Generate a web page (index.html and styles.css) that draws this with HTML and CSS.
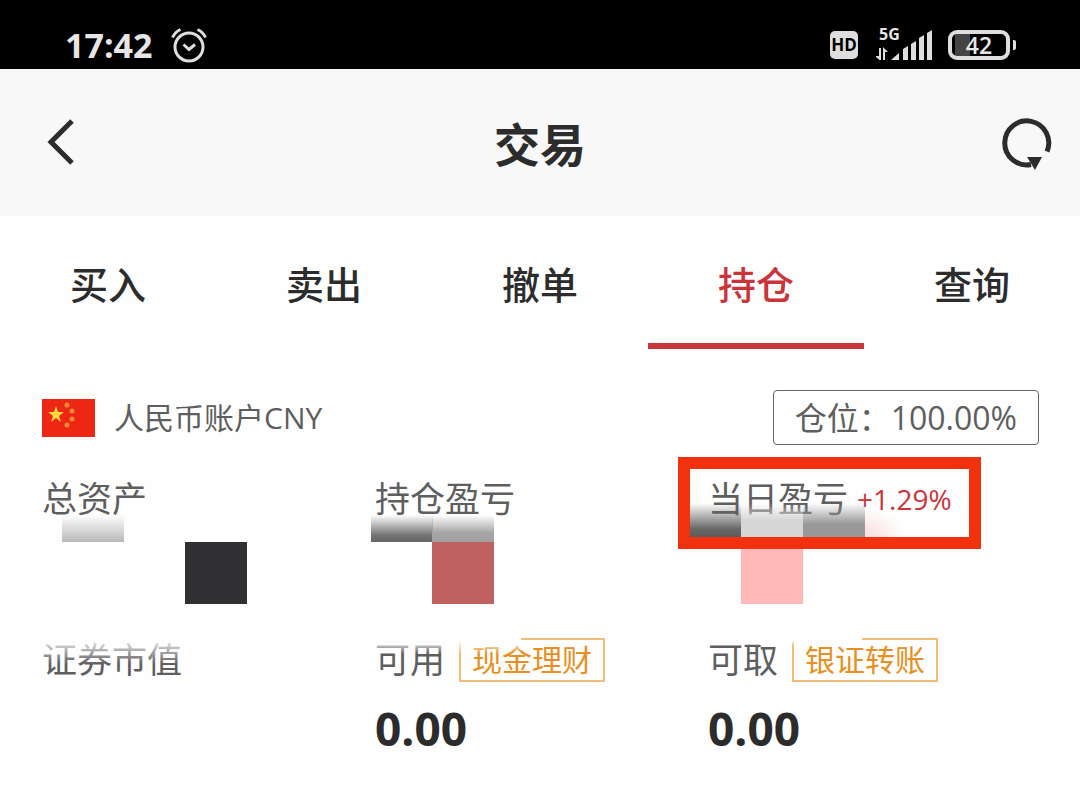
FILE: index.html
```html
<!DOCTYPE html>
<html lang="zh-CN">
<head>
<meta charset="utf-8">
<meta name="viewport" content="width=device-width, initial-scale=1">
<title>交易</title>
<link rel="stylesheet" href="styles.css">
</head>
<body>
<div class="status">
  <span class="status-time">17:42</span>
  <svg class="status-alarm" width="36" height="36" viewBox="0 0 36 36" fill="none" stroke="#dedede" stroke-width="3" aria-hidden="true">
    <circle cx="18" cy="20" r="14"/>
    <path d="M12.500 17.500l5.500 5 6-5"/>
    <path d="M1.500 10.500Q4 5 9.500 2.500M26.500 2.500Q32 5 34.500 10.500"/>
  </svg>
  <span class="status-hd">HD</span>
  <span class="status-network">
    <span class="network-type">5G</span>
    <svg width="58" height="34" viewBox="0 0 58 34" fill="#dedede" aria-hidden="true">
      <path d="M3 20h2v12H3.500L-1 28h4zM7 32V19l5 5H9v8z"/>
      <path d="M15 32l8-7v7zM27 21l5-3v14h-5zM35 16l5-3v19h-5zM43 10l5-3v25h-5zM51 5l5-3v30h-5z"/>
    </svg>
  </span>
  <span class="status-battery"><span class="battery-body">42</span><span class="battery-tip"></span></span>
</div>

<header class="header">
  <button class="icon-button back" type="button" aria-label="返回">
    <svg width="30" height="48" viewBox="0 0 30 48" fill="none" stroke="#2c2c2d" stroke-width="5"><path d="M26 2L5 23l21 21"/></svg>
  </button>
  <h1 class="title">交易</h1>
  <button class="icon-button refresh" type="button" aria-label="刷新">
    <svg width="50" height="54" viewBox="0 0 50 54"><path d="M45 35.500A22 22 0 1 0 29 48.500" fill="none" stroke="#2c2c2d" stroke-width="5"/><path d="M25 41h15l-7 13z" fill="#2c2c2d"/></svg>
  </button>
</header>

<nav class="tabs">
  <button class="tab" type="button">买入</button>
  <button class="tab" type="button">卖出</button>
  <button class="tab" type="button">撤单</button>
  <button class="tab active" type="button" aria-current="page">持仓</button>
  <button class="tab" type="button">查询</button>
</nav>

<main class="account">
  <div class="account-head">
    <svg class="flag" width="53" height="38" viewBox="0 0 53 38" aria-hidden="true">
      <rect width="53" height="38" fill="#ee2614"/>
      <path d="M14 7l2 6h6l-5 4 2 6-5-4-5 4 2-6-5-4h6z" fill="#fddb3a"/>
      <g fill="#f88a35"><circle cx="25" cy="6" r="2.500"/><circle cx="30" cy="12" r="2.500"/><circle cx="30" cy="20" r="2.500"/><circle cx="25" cy="26" r="2.500"/></g>
    </svg>
    <span class="account-name">人民币账户CNY</span>
    <span class="position">仓位：100.00%</span>
  </div>

  <div class="metrics">
    <section class="metric">
      <div class="metric-label">总资产</div>
      <i class="tile total-a"></i><i class="tile total-b"></i>
    </section>
    <section class="metric">
      <div class="metric-label">持仓盈亏</div>
      <i class="tile hold-a"></i><i class="tile hold-b"></i><i class="tile hold-c"></i>
    </section>
    <section class="metric">
      <div class="metric-label">当日盈亏<span class="change">+1.29%</span></div>
      <i class="tile day-a"></i><i class="tile day-b"></i><i class="tile day-c"></i><i class="tile day-d"></i><i class="tile day-e"></i>
      <i class="highlight"></i>
    </section>
    <section class="metric">
      <div class="metric-label">证券市值</div>
      <i class="tile fade-market"></i>
    </section>
    <section class="metric">
      <div class="metric-label">可用<button class="tag" type="button">现金理财</button></div>
      <div class="metric-value">0.00</div>
      <i class="tile fade-available"></i>
    </section>
    <section class="metric">
      <div class="metric-label">可取<button class="tag" type="button">银证转账</button></div>
      <div class="metric-value">0.00</div>
      <i class="tile fade-withdraw"></i>
    </section>
  </div>
</main>
</body>
</html>
```
FILE: styles.css
```css
* { box-sizing: border-box; }

body {
  margin: 0;
  background: #fefefe;
  color: #2c2c2d;
  font-family: "Open Sans", "Noto Sans CJK SC", sans-serif;
}

button {
  margin: 0;
  padding: 0;
  border: 0;
  background: none;
  color: inherit;
  font: inherit;
  cursor: pointer;
}

svg { display: block; }

/* Status bar */
.status {
  display: flex;
  align-items: center;
  height: 69px;
  padding: 21px 80px 0 65px;
  background: #000;
  color: #e6e6e6;
}

.status-time {
  font-size: 34px;
  font-weight: 700;
  line-height: 48px;
}

.status-alarm { margin-left: 19px; }

.status-hd {
  width: 28px;
  height: 28px;
  margin-left: auto;
  border-radius: 5px;
  background: #dedede;
  color: #000;
  font-size: 17px;
  font-weight: 700;
  line-height: 28px;
  text-align: center;
}

.status-network {
  position: relative;
  margin-left: 18px;
}

.network-type {
  position: absolute;
  top: -4px;
  left: 3px;
  font-size: 16px;
  font-weight: 700;
  line-height: 20px;
}

.status-battery {
  display: flex;
  align-items: center;
  gap: 3px;
  margin-left: 14px;
}

.battery-body {
  width: 62px;
  height: 30px;
  border: 4px solid #dedede;
  border-radius: 9px;
  background: linear-gradient(90deg, #000 3px, #444 3px, #444 18px, #000 18px);
  font-size: 23px;
  font-weight: 600;
  line-height: 22px;
  text-align: center;
}

.battery-tip {
  width: 3px;
  height: 10px;
  margin-right: -16px;
  border-radius: 0 2px 2px 0;
  background: #dedede;
}

/* Title bar */
.header {
  display: grid;
  grid-template-columns: 1fr auto 1fr;
  align-items: center;
  height: 147px;
  padding: 0 28px;
  background: #f8f8f8;
}

.back {
  justify-self: start;
  padding-left: 18px;
}

.refresh { justify-self: end; }

.title {
  margin: 0;
  padding-top: 2px;
  font-size: 46px;
  font-weight: 700;
  line-height: 60px;
}

/* Tabs */
.tabs {
  display: grid;
  grid-template-columns: repeat(5, 1fr);
}

.tab {
  height: 133px;
  padding-top: 8px;
  border-bottom: 6px solid transparent;
  font-size: 38px;
  font-weight: 500;
  line-height: 48px;
}

.tab.active {
  border-color: #c9353a;
  color: #c9353a;
}

/* Account summary */
.account { padding: 41px 39px 27px 42px; }

.account-head {
  display: flex;
  align-items: center;
  color: #5e5e5f;
}

.account-name {
  margin-left: 19px;
  font-size: 30px;
  line-height: 40px;
}

.position {
  margin-right: 2px;
  margin-left: auto;
  padding: 0 21px;
  border: 1px solid #666;
  border-radius: 4px;
  font-size: 32px;
  line-height: 53px;
}

.metrics {
  display: grid;
  grid-template-columns: repeat(3, 1fr);
  margin-top: 28px;
}

.metric {
  position: relative;
  min-height: 130px;
}

.metric:nth-child(-n+3) { min-height: 161px; }

.metric-label {
  display: flex;
  align-items: center;
  height: 52px;
  color: #5e5e5f;
  font-size: 35px;
  line-height: 54px;
  white-space: nowrap;
}

.change {
  margin-left: 9px;
  color: #c9353a;
  font-size: 28px;
}

.metric-value {
  margin-top: 10px;
  font-size: 46px;
  font-weight: 700;
  line-height: 64px;
}

.tag {
  height: 44px;
  margin-left: 14px;
  padding: 0 11px;
  border: 2px solid #f0bd78;
  color: #e78f22;
  font-size: 30px;
  line-height: 40px;
}

/* Mosaic tiles that hide the private amounts */
.tile {
  position: absolute;
  top: 42px;
  width: 62px;
  height: 27px;
}

.total-a { left: 20px; background: linear-gradient(#fefefe00, #b9b9b9); }
.total-b { left: 143px; top: 69px; height: 62px; background: #303032; }
.hold-a { left: -4px; background: linear-gradient(#fefefe00, #737373 75%, #666); }
.hold-b { left: 57px; background: linear-gradient(#fefefe00, #a6a6a6 65%, #a0a0a0); }
.hold-c { left: 57px; top: 69px; height: 62px; background: #c06060; }
.day-a { left: -18px; top: 30px; width: 51px; height: 35px; background: linear-gradient(#fefefe00, #666 75%, #5c5c5e); }
.day-b { left: 33px; top: 30px; height: 35px; background: linear-gradient(#fefefe00, #d6d6d6 50%); }
.day-c { left: 95px; top: 30px; height: 35px; background: linear-gradient(#fefefe00, #999 60%); }
.day-d { left: 157px; top: 35px; width: 40px; height: 30px; background: radial-gradient(ellipse farthest-side at bottom left, #f8dcdc, #fefefe00); }
.day-e { left: 33px; top: 69px; height: 62px; background: #ffb9b9; }

.highlight {
  position: absolute;
  top: -16px;
  left: -30px;
  width: 303px;
  height: 92px;
  border: 12px solid #f2310f;
}

/* Soft lower edge of the mosaic over the second row */
.fade-market { left: 0; top: 0; width: 150px; height: 30px; background: linear-gradient(#fefefe 10%, #fefefe00); }
.fade-available { left: 0; top: 0; width: 146px; height: 20px; background: linear-gradient(#fefefe 30%, #fefefe00); }
.fade-withdraw { left: 60px; top: 0; width: 94px; height: 12px; background: linear-gradient(#fefefe 50%, #fefefe00); }
```
